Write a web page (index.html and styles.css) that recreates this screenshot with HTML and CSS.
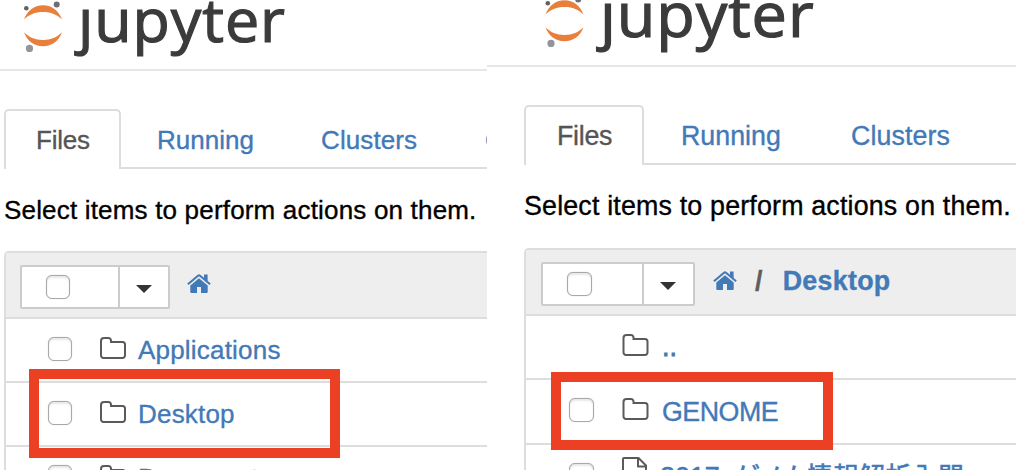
FILE: index.html
```html
<!DOCTYPE html>
<html lang="en">
<head>
<meta charset="utf-8">
<title>Jupyter file browser</title>
<link rel="stylesheet" href="styles.css">
</head>
<body>
<svg class="defs" width="0" height="0" aria-hidden="true">
  <symbol id="moons" viewBox="0 0 40 54">
    <path d="M1 19.500C4 11 11 5.300 20 5.300s16 5.700 19 14.200C34 14.500 28 12 20 12S6 14.500 1 19.500z" fill="#e8803c"/>
    <path d="M1 32.300C4 41 11 46.200 20 46.200s16-5.200 19-13.900C34 37.300 28 40 20 40S6 37.300 1 32.300z" fill="#e8803c"/>
    <circle cx="3.300" cy="8.200" r="2.300" fill="#616262"/>
    <circle cx="33.700" cy="4.500" r="3" fill="#6d6e71"/>
    <circle cx="6.500" cy="48.400" r="3.600" fill="#949598"/>
  </symbol>
  <symbol id="home" viewBox="0 0 24 20">
    <path d="M12 4.200L20.700 11.400V18a1 1 0 0 1-1 1H14v-6h-4v6H4.300a1 1 0 0 1-1-1v-6.600z" fill="#4279b7"/>
    <path d="M.900 10.200L11 1.700q1-.8 2 0L23.100 10.200" fill="none" stroke="#4279b7" stroke-width="2.100"/>
    <path d="M17 .500h3.600v7l-3.600-2.900z" fill="#4279b7"/>
  </symbol>
  <symbol id="folder" viewBox="0 0 26 22">
    <path d="M1 4a3 3 0 0 1 3-3h4.500a2.500 2.500 0 0 1 2.500 2.500V5h11.500a2.500 2.500 0 0 1 2.500 2.500v11a2.500 2.500 0 0 1-2.500 2.500h-19a2.500 2.500 0 0 1-2.500-2.500z" fill="none" stroke="#5a5a5a" stroke-width="2"/>
  </symbol>
  <symbol id="file" viewBox="0 0 26 30">
    <path d="M1 29V2a1 1 0 0 1 1-1h14.500L24 8.500V29zM16 1v8.500h8" fill="none" stroke="#5a5a5a" stroke-width="2" stroke-linejoin="round"/>
  </symbol>
</svg>
<main class="compare">
  <section class="panel panel-home">
    <header class="brand"><svg class="moons"><use href="#moons"/></svg><span class="wordmark">ȷupyter</span></header>
    <nav class="tabs"><a class="tab active">Files</a><a class="tab running">Running</a><a class="tab clusters">Clusters</a><a class="tab">C</a></nav>
    <p class="hint">Select items to perform actions on them.</p>
    <div class="list">
      <div class="toolbar">
        <div class="select"><span class="all"><i class="check"></i></span><span class="drop"><i class="caret"></i></span></div>
        <svg class="home"><use href="#home"/></svg>
      </div>
      <div class="row"><i class="check"></i><svg class="folder"><use href="#folder"/></svg><a class="name">Applications</a></div>
      <div class="row"><i class="check"></i><svg class="folder"><use href="#folder"/></svg><a class="name">Desktop</a></div>
      <div class="row"><i class="check"></i><svg class="folder"><use href="#folder"/></svg><a class="name">Documents</a></div>
    </div>
    <div class="highlight"></div>
  </section>
  <section class="panel panel-desktop">
    <header class="brand"><svg class="moons"><use href="#moons"/></svg><span class="wordmark">ȷupyter</span></header>
    <nav class="tabs"><a class="tab active">Files</a><a class="tab running">Running</a><a class="tab clusters">Clusters</a></nav>
    <p class="hint">Select items to perform actions on them.</p>
    <div class="list">
      <div class="toolbar">
        <div class="select"><span class="all"><i class="check"></i></span><span class="drop"><i class="caret"></i></span></div>
        <svg class="home"><use href="#home"/></svg>
        <span class="slash">/</span><a class="crumb">Desktop</a>
      </div>
      <div class="row parent"><i class="check hidden"></i><svg class="folder"><use href="#folder"/></svg><a class="name dots">..</a></div>
      <div class="row"><i class="check"></i><svg class="folder"><use href="#folder"/></svg><a class="name">GENOME</a></div>
      <div class="row book"><i class="check"></i><svg class="file"><use href="#file"/></svg><a class="name">2017_<span class="ja" lang="ja"><span class="kana">ゲノム</span>情報解析入門</span></a></div>
    </div>
    <div class="highlight"></div>
  </section>
</main>
</body>
</html>
```
FILE: styles.css
```css
* { box-sizing: border-box; }
body { margin: 0; background: #fff; }
.defs { display: block; height: 0; }
.compare { display: flex; width: 1016px; height: 470px; overflow: hidden; }
svg { display: block; flex: none; }

.panel {
  position: relative;
  flex: none;
  height: 470px;
  overflow: hidden;
  font-family: "Liberation Sans", Arial, sans-serif;
  font-size: 26px;
  letter-spacing: 0.2px;
  -webkit-text-stroke: 0.35px currentColor;
  color: #000;
  white-space: nowrap;
}
.panel-home { width: 487px; }
.panel-desktop { width: 529px; font-size: 26.8px; }

/* Brand */
.brand { display: flex; align-items: flex-start; height: 71px; border-bottom: 2px solid #e6e6e6; padding-left: 23px; }
.moons { width: 40px; height: 54px; }
.wordmark {
  margin: -23px 0 0 15px;
  font: 61px/84px "Open Sans", "Noto Sans", sans-serif;
  letter-spacing: 0.9px;
  -webkit-text-stroke: 1.2px #3b3b3c;
  color: #3b3b3c;
}
.panel-desktop .brand { height: 67px; padding-left: 57px; }
.panel-desktop .moons { width: 41px; height: 54px; margin-top: -5px; }
.panel-desktop .wordmark { margin-top: -29px; font-size: 63px; }

/* Tabs */
.tabs { display: flex; height: 60px; margin: 38px 0 0 4px; line-height: 58px; color: #4279b7; }
.tab { flex: none; height: 60px; border-bottom: 2px solid #ddd; padding-top: 2px; }
.tab.active { width: 117px; padding: 0 0 0 30px; border: 2px solid #ddd; border-bottom: 0; border-radius: 5px 5px 0 0; color: #555; letter-spacing: -0.2px; }
.running { width: 164px; padding-left: 36px; letter-spacing: 0; }
.clusters { width: 200px; padding-left: 36px; letter-spacing: 0.1px; }
.panel-desktop .tabs { margin-left: 37px; }
.panel-desktop .tab.active { width: 120px; padding-left: 31px; letter-spacing: -0.3px; }
.panel-desktop .running { width: 170px; padding-left: 37px; }
.panel-desktop .clusters { width: 202px; padding-left: 37px; }

.hint { margin: 23px 0; line-height: 36px; padding-left: 4px; letter-spacing: 0.18px; }
.panel-desktop .hint { padding-left: 37px; }

/* File list */
.list { margin-left: 4px; border: 2px solid #ddd; border-right: 0; border-radius: 5px 0 0 0; }
.toolbar { display: flex; align-items: flex-start; height: 66px; padding: 12px 0 0 14px; background: #eee; border-bottom: 2px solid #ddd; }
.select { display: flex; width: 150px; height: 44px; border: 2px solid #ccc; border-radius: 2px; background: #fff; }
.all { width: 98px; padding: 8px 0 0 24px; border-right: 2px solid #ccc; }
.all, .drop { flex: none; }
.check { display: block; flex: none; width: 24px; height: 24px; border: 1.500px solid #a9a9a9; border-radius: 6px; background: #fff; box-shadow: inset 0 2px 2px #e8e8e8, 0 0 1px #bbb; }
.check.hidden { visibility: hidden; }
.drop { padding: 18px 0 0 16px; }
.caret { display: block; border: 8px solid transparent; border-top-color: #333; border-bottom: 0; }
.home { width: 24px; height: 20px; margin: 9px 0 0 17px; }
.row { display: flex; align-items: flex-start; height: 64px; padding: 18px 0 0 42px; border-bottom: 2px solid #ddd; }
.folder { width: 26px; height: 22px; margin-left: 28px; }
.name { margin: -5px 0 0 12px; line-height: 36px; color: #4279b7; }

.panel-desktop .list { margin-left: 37px; margin-top: 24px; }
.panel-desktop .toolbar { padding-left: 15px; }
.panel-desktop .select { width: 154px; }
.panel-desktop .all { width: 101px; }
.panel-desktop .check { width: 25px; }
.panel-desktop .home { margin: 9px 0 0 18px; }
.slash { margin: 1px 0 0 18px; line-height: 36px; color: #5e5e5e; font-weight: bold; }
.crumb { margin: 1px 0 0 20px; line-height: 36px; color: #4279b7; font-weight: bold; letter-spacing: 0.3px; }
.panel-desktop .row { padding-left: 43px; height: 65px; }
.panel-desktop .row.parent { height: 64px; }
.panel-desktop .folder { width: 27px; margin-left: 28px; }
.panel-desktop .name { letter-spacing: -0.5px; margin-left: 13px; margin-top: -4px; }
.panel-desktop .name.dots { margin-top: -5px; letter-spacing: 0; -webkit-text-stroke-width: 0.8px; }
.file { width: 26px; height: 30px; margin: -6px 0 0 28px; }
.panel-desktop .book .name { margin-left: 12px; letter-spacing: 0; -webkit-text-stroke-width: 0.6px; }
.ja { font-family: "Noto Sans CJK JP", sans-serif; font-size: 25.600px; line-height: 30px; letter-spacing: 0.7px; }
.kana { letter-spacing: -1.300px; }

/* Callouts over the chosen rows */
.highlight { position: absolute; left: 29px; top: 369px; width: 311px; height: 89px; border: 10px solid #ec4025; }
.panel-desktop .highlight { left: 64px; top: 372px; width: 282px; height: 78px; }
```
